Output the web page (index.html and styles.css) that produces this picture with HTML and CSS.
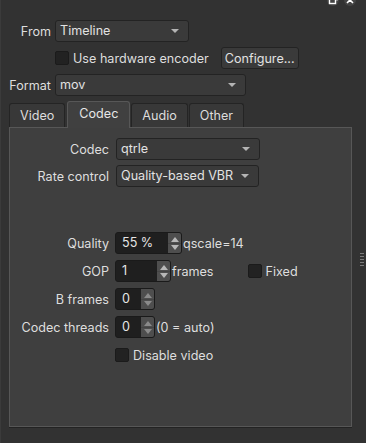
FILE: index.html
```html
<!DOCTYPE html>
<html lang="en">
<head>
    <meta charset="UTF-8">
    <title>Export</title>
    <link rel="stylesheet" href="styles.css">
</head>
<body>
    <div class="dock">
        <div class="title-buttons">
            <span class="title-btn">
                <svg width="10" height="10" viewBox="0 0 10 10"><rect x="1.5" y="3.5" width="6" height="5" fill="none" stroke="#fff" stroke-width="1.4"/><path d="M4 1.5h5v4" fill="none" stroke="#fff" stroke-width="1.2"/></svg>
            </span>
            <span class="title-btn">
                <svg width="10" height="10" viewBox="0 0 10 10"><path d="M2 2l6 6M8 2l-6 6" stroke="#fff" stroke-width="1.6"/></svg>
            </span>
        </div>

        <div class="top-form">
            <label class="form-label">From</label>
            <div class="combo combo-from">Timeline<span class="arrow"></span></div>

            <span></span>
            <div class="row">
                <span class="check"></span>
                <span class="check-text">Use hardware encoder</span>
                <button class="btn">Configure...</button>
            </div>

            <label class="form-label">Format</label>
            <div class="combo combo-format">mov<span class="arrow"></span></div>
        </div>

        <div class="tabs">
            <div class="tab">Video</div>
            <div class="tab tab-active">Codec</div>
            <div class="tab">Audio</div>
            <div class="tab">Other</div>
        </div>

        <div class="pane">
            <div class="pane-form">
                <label class="form-label">Codec</label>
                <div class="combo combo-codec">qtrle<span class="arrow"></span></div>

                <label class="form-label">Rate control</label>
                <div class="combo combo-rate">Quality-based VBR<span class="arrow"></span></div>
            </div>

            <div class="pane-form pane-form-lower">
                <label class="form-label">Quality</label>
                <div class="row">
                    <div class="spin spin-quality"><span class="spin-value">55 %</span><span class="spin-btns"><i class="up"></i><i class="down"></i></span></div>
                    <span class="suffix">qscale=14</span>
                </div>

                <label class="form-label">GOP</label>
                <div class="row">
                    <div class="spin spin-gop"><span class="spin-value">1</span><span class="spin-btns"><i class="up"></i><i class="down"></i></span></div>
                    <span class="suffix">frames</span>
                    <span class="check check-fixed"></span>
                    <span class="check-text">Fixed</span>
                </div>

                <label class="form-label">B frames</label>
                <div class="row">
                    <div class="spin spin-small"><span class="spin-value">0</span><span class="spin-btns spin-dim"><i class="up"></i><i class="down"></i></span></div>
                </div>

                <label class="form-label">Codec threads</label>
                <div class="row">
                    <div class="spin spin-small"><span class="spin-value">0</span><span class="spin-btns spin-dim"><i class="up"></i><i class="down"></i></span></div>
                    <span class="suffix">(0 = auto)</span>
                </div>

                <span></span>
                <div class="row">
                    <span class="check"></span>
                    <span class="check-text">Disable video</span>
                </div>
            </div>
        </div>

        <div class="grip"></div>
    </div>
</body>
</html>
```

FILE: styles.css
```css
/* Base */
* {
    margin: 0;
    padding: 0;
    box-sizing: border-box;
}

body {
    font-family: Inter, "Liberation Sans", sans-serif;
    font-size: 12.6px;
    background-color: #323232;
    color: #dedede;
}

.dock {
    position: relative;
    height: 443px;
    padding: 20px 14px 0 8px;
    border-left: 1px solid #3b3b3b;
    overflow: hidden;
}

/* Floating / close buttons of the dock title */
.title-buttons {
    position: absolute;
    top: -6px;
    right: 10px;
    display: flex;
    gap: 5px;
}

.title-btn {
    width: 12px;
    height: 12px;
    border-radius: 50%;
    background-color: #444;
    display: flex;
    align-items: center;
    justify-content: center;
}

/* Forms */
.top-form {
    display: grid;
    grid-template-columns: 42px 1fr;
    column-gap: 4px;
    row-gap: 5px;
    align-items: center;
}

.form-label {
    text-align: right;
    white-space: nowrap;
}

.row {
    display: flex;
    align-items: center;
    height: 22px;
}

.combo {
    position: relative;
    height: 22px;
    line-height: 20px;
    padding-left: 4px;
    background-color: #3a3a3a;
    border: 1px solid #232323;
    border-radius: 3px;
    color: #e2e2e2;
}

.combo .arrow {
    position: absolute;
    right: 9px;
    top: 8px;
    border-left: 4px solid transparent;
    border-right: 4px solid transparent;
    border-top: 4px solid #b4b4b4;
}

.combo-from { width: 134px; }
.combo-format { width: 191px; }
.combo-codec { width: 144px; margin-left: 1px; }
.combo-rate { width: 143px; margin-left: 1px; }

.check {
    width: 14px;
    height: 14px;
    background-color: #222;
    border: 1px solid #1b1b1b;
    border-radius: 2px;
    flex-shrink: 0;
}

.check-text {
    margin-left: 4px;
    white-space: nowrap;
}

.btn {
    margin-left: 12px;
    height: 22px;
    padding: 0 3px;
    font: inherit;
    color: #e2e2e2;
    background-color: #3a3a3a;
    border: 1px solid #232323;
    border-radius: 3px;
}

/* Tabs */
.tabs {
    display: flex;
    align-items: flex-end;
    height: 26px;
    margin-top: 5px;
    position: relative;
    z-index: 1;
}

.tab {
    height: 24px;
    line-height: 23px;
    padding: 0 10px;
    margin-right: 1px;
    background-color: #383838;
    border: 1px solid #242424;
    border-bottom: none;
    border-radius: 3px 3px 0 0;
    color: #dcdcdc;
}

.tab:first-child {
    margin-right: 2px;
}

.tab-active {
    height: 27px;
    line-height: 24px;
    margin-bottom: -1px;
    padding: 0 11px;
    background-color: #404040;
    border-color: #575757;
    color: #e6e6e6;
}

/* Tab pane */
.pane {
    height: 300px;
    background-color: #3f3f3f;
    border: 1px solid #575757;
    box-shadow: 0 1px 0 #232323;
    padding: 10px 0 0 0;
}

.pane-form {
    display: grid;
    grid-template-columns: 99px 1fr;
    column-gap: 6px;
    row-gap: 5px;
    align-items: center;
}

.pane-form-lower {
    margin-top: 45px;
    row-gap: 6px;
}

/* Spin boxes */
.spin {
    display: flex;
    height: 22px;
    background-color: #1f1f1f;
    border: 1px solid #1a1a1a;
    border-radius: 3px;
    overflow: hidden;
}

.spin-value {
    flex: 1;
    line-height: 20px;
    padding-left: 6px;
    color: #e6e6e6;
}

.spin-btns {
    width: 13px;
    display: flex;
    flex-direction: column;
    background-color: #4e4e4e;
}

.spin-btns i {
    flex: 1;
    display: flex;
    justify-content: center;
}

.spin-btns .up::before,
.spin-btns .down::before {
    content: "";
    border-left: 4px solid transparent;
    border-right: 4px solid transparent;
}

.spin-btns .up {
    align-items: flex-end;
    padding-bottom: 1px;
    border-bottom: 1px solid #444;
}

.spin-btns .up::before {
    border-bottom: 5px solid #b8b8b8;
}

.spin-btns .down {
    align-items: flex-start;
    padding-top: 1px;
}

.spin-btns .down::before {
    border-top: 5px solid #b8b8b8;
}

.spin-dim .up::before { border-bottom-color: #8a8a8a; }
.spin-dim .down::before { border-top-color: #8a8a8a; }

.spin-quality { width: 67px; }
.spin-gop { width: 56px; }
.spin-small { width: 40px; }

.suffix {
    margin-left: 1px;
    white-space: nowrap;
}

.check-fixed {
    margin-left: 34px;
}

/* Resize grip at the right edge */
.grip {
    position: absolute;
    right: 2px;
    top: 252px;
    width: 4px;
    height: 16px;
    background-image: radial-gradient(circle, #7a7a7a 0.8px, transparent 1px);
    background-size: 2px 3px;
}
```
